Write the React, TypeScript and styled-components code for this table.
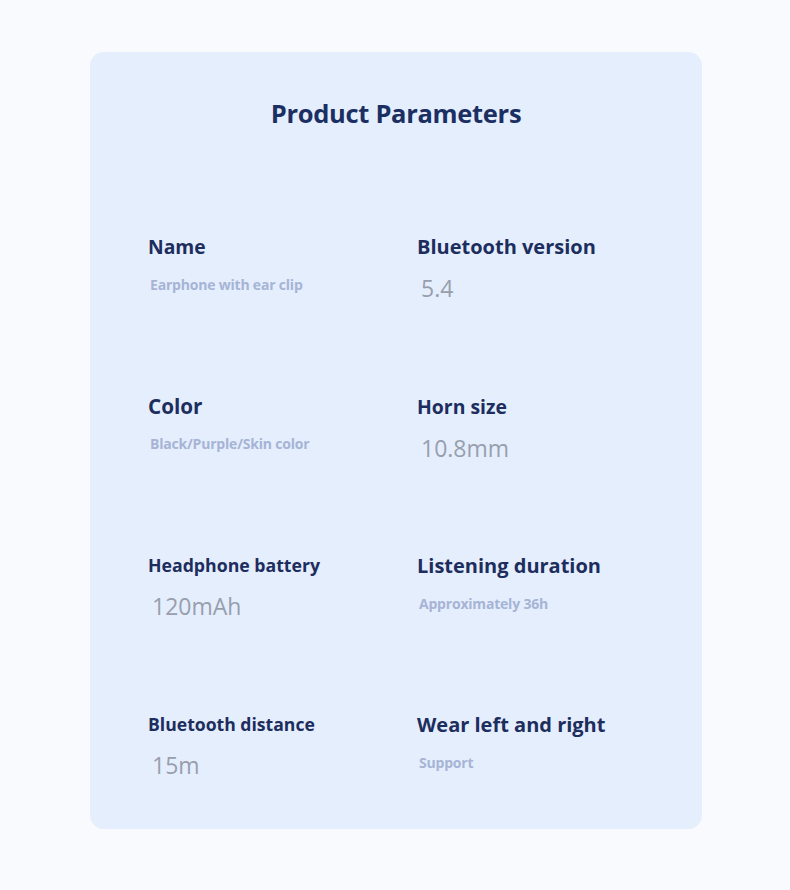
import React, { FC } from 'react';
import styled, { createGlobalStyle } from 'styled-components';

const GlobalStyle = createGlobalStyle`
  html, body {
    margin: 0;
    padding: 0;
    background: #f8fafd;
    font-family: "Open Sans", "Liberation Sans", sans-serif;
  }
`;

const Page = styled.div`
  width: 790px;
  height: 890px;
  padding-top: 52px;
  box-sizing: border-box;
`;

const Card = styled.div`
  margin-left: 90px;
  width: 612px;
  height: 777px;
  box-sizing: border-box;
  background: #e5eefc;
  border-radius: 14px;
  padding: 43px 0 0 58px;
`;

const Title = styled.h1`
  margin: 0 0 103px -58px;
  text-align: center;
  font-size: 25.5px;
  font-weight: 700;
  letter-spacing: -0.3px;
  line-height: 36px;
  color: #1b2f63;
`;

const Grid = styled.div`
  display: grid;
  grid-template-columns: 269px 240px;
  grid-auto-rows: 159px;
`;

const Cell = styled.div<{ $shift?: number }>`
  display: flex;
  flex-direction: column;
  margin-top: ${(p) => p.$shift || 0}px;
`;

const Label = styled.div<{ $size: number }>`
  font-size: ${(p) => p.$size}px;
  font-weight: 700;
  line-height: 26px;
  color: #1c2d5e;
  white-space: nowrap;
`;

const TextValue = styled.div`
  margin: 15px 0 0 2px;
  font-size: 14px;
  font-weight: 700;
  line-height: 20px;
  color: #a6b4d6;
  letter-spacing: -0.2px;
  white-space: nowrap;
`;

const NumValue = styled.div`
  margin: 13px 0 0 4px;
  font-size: 23px;
  font-weight: 400;
  line-height: 30px;
  color: #979fae;
`;

type Param = { label: string; value: string; kind: 'text' | 'num'; size: number; shift?: number };

const params: Param[] = [
  { label: 'Name', value: 'Earphone with ear clip', kind: 'text', size: 19.3 },
  { label: 'Bluetooth version', value: '5.4', kind: 'num', size: 20 },
  { label: 'Color', value: 'Black/Purple/Skin color', kind: 'text', size: 20.7 },
  { label: 'Horn size', value: '10.8mm', kind: 'num', size: 19.4, shift: 1 },
  { label: 'Headphone battery', value: '120mAh', kind: 'num', size: 17.7 },
  { label: 'Listening duration', value: 'Approximately 36h', kind: 'text', size: 20, shift: 1 },
  { label: 'Bluetooth distance', value: '15m', kind: 'num', size: 17.6 },
  { label: 'Wear left and right', value: 'Support', kind: 'text', size: 20, shift: 1 },
];

const App: FC = () => {
  return (
    <Page>
      <GlobalStyle />
      <Card>
        <Title>Product Parameters</Title>
        <Grid>
          {params.map((p) => (
            <Cell key={p.label} $shift={p.shift}>
              <Label $size={p.size}>{p.label}</Label>
              {p.kind === 'text' ? <TextValue>{p.value}</TextValue> : <NumValue>{p.value}</NumValue>}
            </Cell>
          ))}
        </Grid>
      </Card>
    </Page>
  );
};

export default App;
